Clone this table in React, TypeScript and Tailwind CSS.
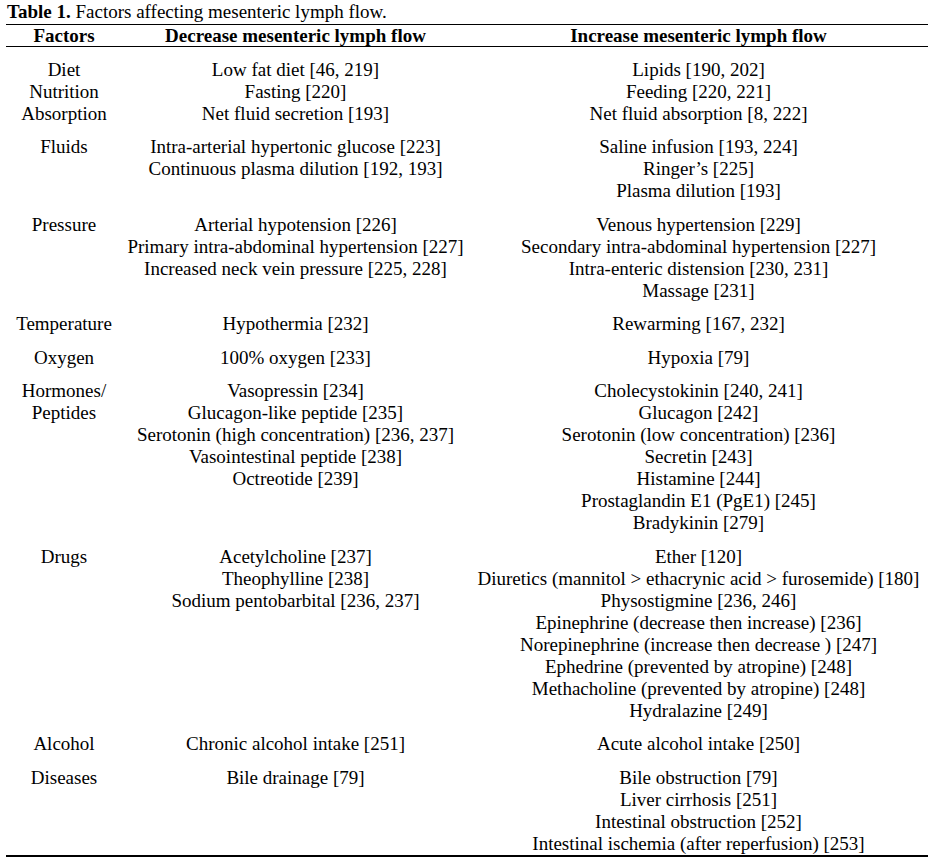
import React from 'react';

interface Group {
  factor: string[];
  decrease: string[];
  increase: string[];
}

const groups: Group[] = [
  {
    factor: ['Diet', 'Nutrition', 'Absorption'],
    decrease: ['Low fat diet [46, 219]', 'Fasting [220]', 'Net fluid secretion [193]'],
    increase: ['Lipids [190, 202]', 'Feeding [220, 221]', 'Net fluid absorption [8, 222]'],
  },
  {
    factor: ['Fluids'],
    decrease: ['Intra-arterial hypertonic glucose [223]', 'Continuous plasma dilution [192, 193]'],
    increase: ['Saline infusion [193, 224]', 'Ringer’s [225]', 'Plasma dilution [193]'],
  },
  {
    factor: ['Pressure'],
    decrease: [
      'Arterial hypotension [226]',
      'Primary intra-abdominal hypertension [227]',
      'Increased neck vein pressure [225, 228]',
    ],
    increase: [
      'Venous hypertension [229]',
      'Secondary intra-abdominal hypertension [227]',
      'Intra-enteric distension [230, 231]',
      'Massage [231]',
    ],
  },
  {
    factor: ['Temperature'],
    decrease: ['Hypothermia [232]'],
    increase: ['Rewarming [167, 232]'],
  },
  {
    factor: ['Oxygen'],
    decrease: ['100% oxygen [233]'],
    increase: ['Hypoxia [79]'],
  },
  {
    factor: ['Hormones/', 'Peptides'],
    decrease: [
      'Vasopressin [234]',
      'Glucagon-like peptide [235]',
      'Serotonin (high concentration) [236, 237]',
      'Vasointestinal peptide [238]',
      'Octreotide [239]',
    ],
    increase: [
      'Cholecystokinin [240, 241]',
      'Glucagon [242]',
      'Serotonin (low concentration) [236]',
      'Secretin [243]',
      'Histamine [244]',
      'Prostaglandin E1 (PgE1) [245]',
      'Bradykinin [279]',
    ],
  },
  {
    factor: ['Drugs'],
    decrease: ['Acetylcholine [237]', 'Theophylline [238]', 'Sodium pentobarbital [236, 237]'],
    increase: [
      'Ether [120]',
      'Diuretics (mannitol > ethacrynic acid > furosemide) [180]',
      'Physostigmine [236, 246]',
      'Epinephrine (decrease then increase) [236]',
      'Norepinephrine (increase then decrease ) [247]',
      'Ephedrine (prevented by atropine) [248]',
      'Methacholine (prevented by atropine) [248]',
      'Hydralazine [249]',
    ],
  },
  {
    factor: ['Alcohol'],
    decrease: ['Chronic alcohol intake [251]'],
    increase: ['Acute alcohol intake [250]'],
  },
  {
    factor: ['Diseases'],
    decrease: ['Bile drainage [79]'],
    increase: [
      'Bile obstruction [79]',
      'Liver cirrhosis [251]',
      'Intestinal obstruction [252]',
      'Intestinal ischemia (after reperfusion) [253]',
    ],
  },
];

function Cell({ lines }: { lines: string[] }) {
  return (
    <div className="flex flex-col items-center pt-[11.5px]">
      {lines.map((l) => (
        <span key={l} className="whitespace-nowrap">{l}</span>
      ))}
    </div>
  );
}

export default function App() {
  return (
    <div className="w-[932px] h-[866px] bg-white text-black [font-family:'Liberation_Serif',serif] text-[19px] leading-[22px]">
      <div className="pl-[7px] pt-px">
        <span className="font-bold">Table 1.</span> Factors affecting mesenteric lymph flow.
      </div>
      <div className="ml-[6px] w-[922px] mt-px border-t-[1.5px] border-b-[1.5px] border-black grid grid-cols-[116px_347px_1fr] font-bold leading-[21px]">
        <div className="text-center">Factors</div>
        <div className="text-center">Decrease mesenteric lymph flow</div>
        <div className="text-center">Increase mesenteric lymph flow</div>
      </div>
      <div className="ml-[6px] w-[922px] border-b-2 border-black grid grid-cols-[116px_347px_1fr]">
        {groups.map((g) => (
          <React.Fragment key={g.factor[0]}>
            <Cell lines={g.factor} />
            <Cell lines={g.decrease} />
            <Cell lines={g.increase} />
          </React.Fragment>
        ))}
      </div>
    </div>
  );
}
